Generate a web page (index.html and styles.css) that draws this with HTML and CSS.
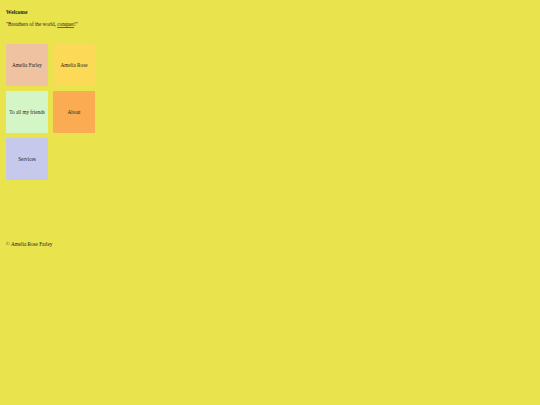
FILE: index.html
```html
<!DOCTYPE html>
<html>
<head>
<meta charset="utf-8">
<link rel="stylesheet" href="styles.css">
</head>
<body>
<div class="page">
  <h1 class="title">Welcome</h1>
  <p class="quote">"Breathers of the world, <a href="#" class="link">conquer</a>!"</p>
  <div class="grid">
    <div class="tile peach">Amelia Farley</div>
    <div class="tile yellow">Amelia Rose</div>
    <div class="tile green">To all my friends</div>
    <div class="tile orange">About</div>
    <div class="tile lavender">Services</div>
  </div>
  <footer class="footer">© Amelia Rose Farley</footer>
</div>
</body>
</html>
```
FILE: styles.css
```css
html, body {
  margin: 0;
  padding: 0;
  background: #e9e44e;
}
.page {
  padding: 9px 6px;
  font-family: "Liberation Serif", "Times New Roman", serif;
  font-size: 5.2px;
  color: #222;
}
.title {
  font-size: 5.5px;
  font-weight: bold;
  margin: 0 0 5px 0;
  line-height: 7px;
}
.quote {
  margin: 0;
  line-height: 7px;
}
.link {
  color: #222;
  text-decoration: underline;
  text-decoration-color: #6a6a40;
}
.grid {
  display: grid;
  grid-template-columns: 42px 42px;
  grid-auto-rows: 42px;
  gap: 5px;
  margin-top: 16px;
}
.tile {
  display: flex;
  align-items: center;
  justify-content: center;
  text-align: center;
}
.peach { background: #efc3a1; }
.yellow { background: #fcd957; }
.green { background: #d4f6c6; }
.orange { background: #fbab52; }
.lavender { background: #c6c9eb; }
.footer {
  margin-top: 61px;
  line-height: 7px;
}
```
